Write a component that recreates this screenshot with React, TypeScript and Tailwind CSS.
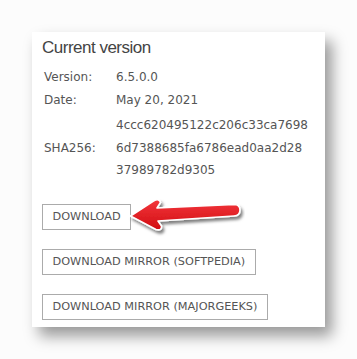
import React from 'react'

const rows = [
  { label: 'Version:', value: ['6.5.0.0'] },
  { label: 'Date:', value: ['May 20, 2021'] },
]

const hash = ['4ccc620495122c206c33ca7698', '6d7388685fa6786ead0aa2d28', '37989782d9305']

const mirrors = ['DOWNLOAD MIRROR (SOFTPEDIA)', 'DOWNLOAD MIRROR (MAJORGEEKS)']

function Btn({ children }: { children: React.ReactNode }) {
  return (
    <button className="flex h-[26px] w-fit items-center border border-[#ababab] bg-white px-[9.5px] text-[11.3px] leading-none text-[#555] [font-family:'DejaVu_Sans',Verdana,sans-serif]">
      {children}
    </button>
  )
}

// red callout arrow pointing at the main button
function Arrow() {
  return (
    <svg
      className="pointer-events-none absolute left-[83px] top-[-9px]"
      width={120}
      height={45}
      viewBox="125 195 120 45"
    >
      <defs>
        <filter id="sh" x="-20%" y="-40%" width="140%" height="180%">
          <feDropShadow dx="2" dy="3" stdDeviation="1.8" floodColor="#000" floodOpacity="0.5" />
        </filter>
        <linearGradient id="rg" x1="0" y1="0" x2="0" y2="1">
          <stop offset="0" stopColor="#f3383c" />
          <stop offset="1" stopColor="#d10c12" />
        </linearGradient>
      </defs>
      <path
        d="M130.5,216 L153.5,201 Q159.5,198 160.5,202.5 L157,208 L234,204.5 Q240,204.5 240,210 Q240,215.5 234,216 L158,221 L161.5,226 Q162,231 156,229.5 Z"
        fill="url(#rg)"
        stroke="#fff"
        strokeWidth={1.6}
        strokeLinejoin="round"
        filter="url(#sh)"
      />
    </svg>
  )
}

export default function App() {
  return (
    <div className="h-[359px] w-[357px] bg-[#fcfcfc] pl-[32px] pt-[32px]">
      <div className="flex h-[295px] w-[293px] flex-col bg-white pl-[10px] pt-[6px] shadow-[7px_9px_14px_rgba(0,0,0,0.4)]">
        <h2 className="text-[17px] leading-[20px] tracking-[-0.5px] text-[#444] [font-family:'Liberation_Sans',Arial,sans-serif]">
          Current version
        </h2>

        <div className="mt-[8px] grid grid-cols-[72px_1fr] pl-[2px] text-[12px] text-[#555] [font-family:'DejaVu_Sans',Verdana,sans-serif]">
          {rows.map((r) => (
            <React.Fragment key={r.label}>
              <div className="leading-[23px]">{r.label}</div>
              <div className="leading-[23px]">{r.value}</div>
            </React.Fragment>
          ))}
          <div className="mt-[2px] flex items-center leading-[22.5px]">SHA256:</div>
          <div className="mt-[2px] leading-[22.5px]">
            {hash.map((h) => (
              <div key={h}>{h}</div>
            ))}
          </div>
        </div>

        <div className="mt-[22px] flex flex-col gap-[19px]">
          <div className="relative">
            <Btn>DOWNLOAD</Btn>
            <Arrow />
          </div>
          {mirrors.map((m) => (
            <Btn key={m}>{m}</Btn>
          ))}
        </div>
      </div>
    </div>
  )
}
